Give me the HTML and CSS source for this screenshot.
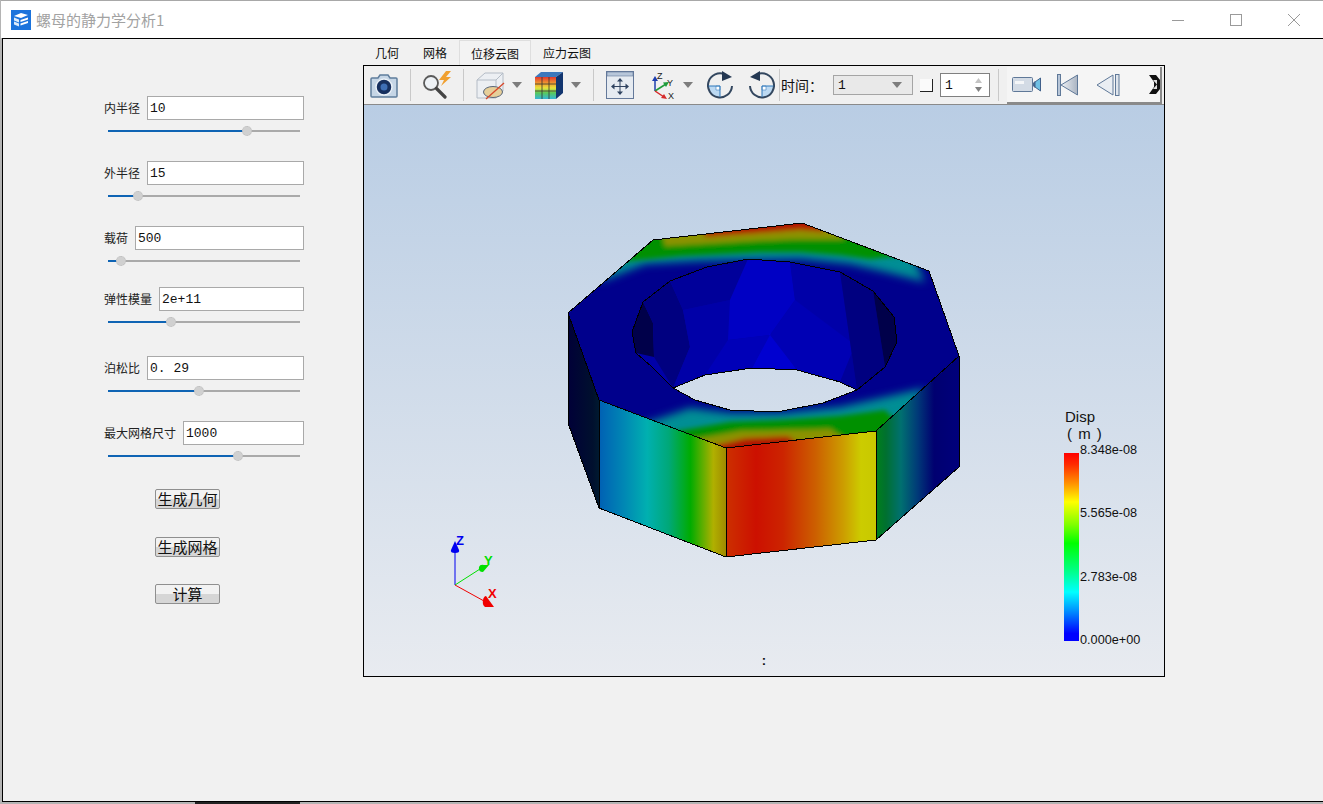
FILE: index.html
```html
<!DOCTYPE html>
<html lang="zh">
<head>
<meta charset="utf-8">
<title>螺母的静力学分析1</title>
<link rel="stylesheet" href="styles.css">
</head>
<body>
<div class="window">
  <header class="titlebar">
    <svg class="app-icon" width="20" height="20" viewBox="0 0 20 20">
      <rect width="20" height="20" fill="#1b73dc"/>
      <path d="M3 6 L10 3 L17 5 L10 8 Z" fill="#fff"/>
      <path d="M3 7.5 L8 9.5 V12.5 L3 10.5 Z M3 11.5 L8 13.5 V16.5 L3 14.5 Z" fill="#dcebfb"/>
      <path d="M9.5 10 L17 7.5 V9.5 L9.5 12 Z M9.5 13.5 L17 11 V13 L9.5 15.5 Z" fill="#fff"/>
    </svg>
    <span class="title-text">螺母的静力学分析1</span>
    <div class="win-controls">
      <span class="win-btn"><svg width="14" height="14" viewBox="0 0 14 14"><path d="M1 7.5H13" stroke="#9a9a9a" fill="none"/></svg></span>
      <span class="win-btn"><svg width="14" height="14" viewBox="0 0 14 14"><rect x="1.5" y="1.5" width="11" height="11" stroke="#9a9a9a" fill="none"/></svg></span>
      <span class="win-btn"><svg width="14" height="14" viewBox="0 0 14 14"><path d="M1 1L13 13M13 1L1 13" stroke="#9a9a9a" fill="none"/></svg></span>
    </div>
  </header>

  <main class="client">
    <section class="form-panel">
      <div class="param">
        <div class="param-row"><label class="param-label">内半径</label><input class="param-input" value="10"></div>
        <div class="slider" style="--v:72.4%"><i class="slider-fill"></i><i class="slider-handle"></i></div>
      </div>
      <div class="param">
        <div class="param-row"><label class="param-label">外半径</label><input class="param-input" value="15"></div>
        <div class="slider" style="--v:15.6%"><i class="slider-fill"></i><i class="slider-handle"></i></div>
      </div>
      <div class="param param--short">
        <div class="param-row"><label class="param-label">载荷</label><input class="param-input" value="500"></div>
        <div class="slider" style="--v:6.8%"><i class="slider-fill"></i><i class="slider-handle"></i></div>
      </div>
      <div class="param param--long">
        <div class="param-row"><label class="param-label">弹性模量</label><input class="param-input" value="2e+11"></div>
        <div class="slider" style="--v:32.8%"><i class="slider-fill"></i><i class="slider-handle"></i></div>
      </div>
      <div class="param">
        <div class="param-row"><label class="param-label">泊松比</label><input class="param-input" value="0. 29"></div>
        <div class="slider" style="--v:47.4%"><i class="slider-fill"></i><i class="slider-handle"></i></div>
      </div>
      <div class="param">
        <div class="param-row"><label class="param-label">最大网格尺寸</label><input class="param-input" value="1000"></div>
        <div class="slider" style="--v:67.7%"><i class="slider-fill"></i><i class="slider-handle"></i></div>
      </div>
      <div class="actions">
        <button class="action">生成几何</button>
        <button class="action">生成网格</button>
        <button class="action">计算</button>
      </div>
    </section>

    <section class="viewer">
      <nav class="tabs">
        <span class="tab">几何</span>
        <span class="tab">网格</span>
        <span class="tab tab--active">位移云图</span>
        <span class="tab">应力云图</span>
      </nav>
      <div class="frame">
        <div class="toolbar">
          <svg class="tool ml-6" width="28" height="25" viewBox="0 0 28 25">
            <path d="M2 5H8L10 2H18L20 5H26Q27 5 27 6V23Q27 24 26 24H2Q1 24 1 23V6Q1 5 2 5Z" fill="#c6d6e6" stroke="#5f7d9c" stroke-width="1.5"/>
            <circle cx="14" cy="14" r="8" fill="#17305f" stroke="#eaf1f8" stroke-width="1.5"/>
            <circle cx="14" cy="14" r="3.5" fill="#3f6fb5"/>
          </svg>
          <i class="sep ml-12"></i>
          <svg class="tool ml-11" width="31" height="28" viewBox="0 0 31 28">
            <circle cx="9" cy="12" r="7" fill="#eef2f6" stroke="#5a5a5a" stroke-width="1.8"/>
            <path d="M14.5 17.5 L23 26" stroke="#444" stroke-width="3.2" stroke-linecap="round"/>
            <path d="M24 0 L17 9 L22 9 L19 15 L29 6 L24 6 L29 0Z" fill="#f0a030"/>
          </svg>
          <i class="sep ml-10"></i>
          <svg class="tool ml-12" width="29" height="29" viewBox="0 0 29 29">
            <path d="M1 9 L9 2 H27 V20 L20 27 H1Z" fill="#eceff3" stroke="#b4bcc6"/>
            <path d="M1 9H20V27M20 9L27 2" fill="none" stroke="#b4bcc6"/>
            <ellipse cx="17" cy="21" rx="9.5" ry="5.5" fill="#e6cf9a" stroke="#59667a"/>
            <path d="M10 28 L28 12" stroke="#d8482a" stroke-width="1.3"/>
          </svg>
          <svg class="tool ml-7" width="10" height="6" viewBox="0 0 10 6"><path d="M0 0H10L5 6Z" fill="#7d7d7d"/></svg>
          <svg class="tool ml-13" width="28" height="28" viewBox="0 0 28 28">
            <defs><linearGradient id="g-cube" x1="0" x2="0" y1="0" y2="1"><stop offset="0" stop-color="#e2382e"/><stop offset=".3" stop-color="#f0a030"/><stop offset=".5" stop-color="#e8e23c"/><stop offset=".72" stop-color="#58c85c"/><stop offset="1" stop-color="#34b6d8"/></linearGradient></defs>
            <path d="M0 6 L6 1 H28 L21 6Z" fill="#3c78bc"/>
            <path d="M21 6 L28 1 V22 L21 28Z" fill="#12356f"/>
            <rect y="6" width="21" height="22" fill="url(#g-cube)"/>
            <path d="M7 6V28M14 6V28M0 13H21M0 20H21" stroke="#333" stroke-width=".8"/>
          </svg>
          <svg class="tool ml-8" width="10" height="6" viewBox="0 0 10 6"><path d="M0 0H10L5 6Z" fill="#7d7d7d"/></svg>
          <i class="sep ml-12"></i>
          <svg class="tool ml-12" width="28" height="28" viewBox="0 0 28 28">
            <rect x=".5" y=".5" width="27" height="27" fill="#e6ebf1" stroke="#64799a"/>
            <rect x="1" y="1" width="26" height="4" fill="#b7c6d9" stroke="#64799a" stroke-width=".6"/>
            <path d="M14 8V23M6.5 15.5H21.5" stroke="#2f4360" stroke-width="1"/>
            <path d="M14 7l-3 3.5h6zM14 24l-3-3.5h6zM5 15.5l3.5-3v6zM23 15.5l-3.5-3v6z" fill="#2f4360"/>
          </svg>
          <svg class="tool ml-18" width="24" height="30" viewBox="0 0 24 30">
            <path d="M3 21V10" stroke="#1f3fae" stroke-width="1.5"/><path d="M3 6l-3 5h6z" fill="#1f3fae"/>
            <path d="M3 21L14 14" stroke="#1f9c3a" stroke-width="1.5"/><path d="M17 12l-6 .5 3 4.5z" fill="#1f9c3a"/>
            <path d="M3 21L12 27" stroke="#d62a2a" stroke-width="1.5"/><path d="M15 29l-6-1 3-4z" fill="#d62a2a"/>
            <text class="axis-mini" x="5" y="9">Z</text><text class="axis-mini" x="15" y="16">Y</text><text class="axis-mini" x="16" y="29">X</text>
          </svg>
          <svg class="tool ml-7" width="10" height="6" viewBox="0 0 10 6"><path d="M0 0H10L5 6Z" fill="#7d7d7d"/></svg>
          <svg class="tool ml-14" width="27" height="28" viewBox="0 0 27 28">
            <path d="M1.5 15H13V26.5A12 12 0 0 1 1.5 15Z" fill="#bcd9f2"/>
            <path d="M13 15H9V19H13Z" fill="#fff" stroke="#3d7fc0" stroke-width=".6"/>
            <path d="M18 3.5A12 12 0 1 0 25 15" fill="none" stroke="#33475f" stroke-width="2"/>
            <path d="M1.5 15H13V26" fill="none" stroke="#2f79bb" stroke-width="1"/>
            <path d="M15 0L25 6L15 10Z" fill="#243852"/>
          </svg>
          <svg class="tool ml-14" width="27" height="28" viewBox="0 0 27 28">
            <path d="M25.5 15H14V26.5A12 12 0 0 0 25.5 15Z" fill="#bcd9f2"/>
            <path d="M14 15H18V19H14Z" fill="#fff" stroke="#3d7fc0" stroke-width=".6"/>
            <path d="M9 3.5A12 12 0 1 1 2 15" fill="none" stroke="#33475f" stroke-width="2"/>
            <path d="M25.5 15H14V26" fill="none" stroke="#2f79bb" stroke-width="1"/>
            <path d="M12 0L2 6L12 10Z" fill="#243852"/>
          </svg>
          <i class="sep ml-4"></i>
          <span class="time-label ml-1">时间：</span>
          <div class="combo"><span>1</span><svg width="10" height="6" viewBox="0 0 10 6"><path d="M0 0H10L5 6Z" fill="#7d7d7d"/></svg></div>
          <i class="mini-check ml-7"></i>
          <div class="spin ml-7"><span>1</span><svg width="7" height="14" viewBox="0 0 7 14"><path d="M3.5 0L7 5H0Z" fill="#c4c4c4"/><path d="M3.5 14L7 9H0Z" fill="#808080"/></svg></div>
          <i class="sep ml-8"></i>
          <div class="anim-bar ml-8">
            <svg class="tool ml-5" width="29" height="17" viewBox="0 0 29 17">
              <rect x=".5" y="1.5" width="20" height="14" rx="1" fill="#d3dbe5" stroke="#5f7898"/>
              <rect x="3" y="5" width="9" height="3" fill="#f4f6f8"/>
              <path d="M21 7L23 5V12L21 10Z" fill="#4a6890"/>
              <path d="M23 6L28.5 2V15L23 11Z" fill="#6fc0e4" stroke="#41608a"/>
            </svg>
            <svg class="tool ml-16" width="21" height="22" viewBox="0 0 21 22">
              <rect x=".5" y=".5" width="3" height="21" fill="#b8c6d8" stroke="#5f7898"/>
              <defs><linearGradient id="g-first" x1="0" x2="1"><stop offset="0" stop-color="#eef1f5"/><stop offset="1" stop-color="#aab4c2"/></linearGradient></defs>
              <path d="M4 11L20.5 1V21Z" fill="url(#g-first)" stroke="#5f7898"/>
            </svg>
            <svg class="tool ml-18" width="24" height="22" viewBox="0 0 24 22">
              <path d="M1 11L17 1V21Z" fill="#eaeef3" stroke="#5f7898"/>
              <rect x="19.5" y=".5" width="3.5" height="21" fill="#dfe5ec" stroke="#5f7898"/>
            </svg>
            <svg class="tool ml-29" width="12" height="19" viewBox="0 0 12 19">
              <path d="M0 0H7L11 5V14L7 19H0L5 12V7Z" fill="#111"/>
              <path d="M4 5H8V14H4L8 9.5Z" fill="#ddd"/>
            </svg>
          </div>
        </div>

        <div class="canvas">
          <svg class="scene" width="800" height="571" viewBox="364 105 800 571">
            <defs>
              <linearGradient id="g-left" gradientUnits="userSpaceOnUse" x1="568" x2="599" y1="0" y2="0"><stop offset="0" stop-color="#000038"/><stop offset=".8" stop-color="#00102e"/><stop offset="1" stop-color="#001a30"/></linearGradient>
              <linearGradient id="g-fl" gradientUnits="userSpaceOnUse" x1="599" x2="726" y1="0" y2="0">
                <stop offset="0" stop-color="#0060b4"/><stop offset=".2" stop-color="#0088b4"/><stop offset=".38" stop-color="#00b0b0"/><stop offset=".55" stop-color="#00a878"/><stop offset=".72" stop-color="#00ac00"/><stop offset=".9" stop-color="#b0b000"/><stop offset="1" stop-color="#a08a00"/>
              </linearGradient>
              <linearGradient id="g-fc" gradientUnits="userSpaceOnUse" x1="726" x2="876" y1="0" y2="0">
                <stop offset="0" stop-color="#cc3000"/><stop offset=".2" stop-color="#cc1000"/><stop offset=".38" stop-color="#cc2400"/><stop offset=".6" stop-color="#cc6000"/><stop offset=".78" stop-color="#cc9c00"/><stop offset=".9" stop-color="#cccc00"/><stop offset="1" stop-color="#c8c800"/>
              </linearGradient>
              <linearGradient id="g-fr" gradientUnits="userSpaceOnUse" x1="876" x2="959" y1="0" y2="0">
                <stop offset="0" stop-color="#00801a"/><stop offset=".12" stop-color="#007030"/><stop offset=".3" stop-color="#007070"/><stop offset=".5" stop-color="#003a78"/><stop offset=".7" stop-color="#000070"/><stop offset="1" stop-color="#00007c"/>
              </linearGradient>
              <filter id="soft" filterUnits="userSpaceOnUse" x="540" y="190" width="450" height="290"><feGaussianBlur stdDeviation="2.4"/></filter>
              <filter id="soft-wide" filterUnits="userSpaceOnUse" x="540" y="190" width="450" height="290"><feGaussianBlur stdDeviation="4.5"/></filter>
              <clipPath id="top-clip"><path clip-rule="evenodd" d="M568 313L653 240L802 223L929 271L959 356L876 431L726 448L599 400Z M632 332L643 302L670 281L707 267L748 259L790 262L840 272L873 291L894 317L897 342L885 367L857 390L823 403L777 412L730 410L695 400L673 388L652 367L636 353Z"/></clipPath>
            </defs>

            <polygon points="568,313 599,400 599,508 568,423" fill="url(#g-left)"/>
            <polygon points="599,400 726,448 726,557 599,508" fill="url(#g-fl)"/>
            <polygon points="726,448 876,431 876,540 726,557" fill="url(#g-fc)"/>
            <polygon points="876,431 959,356 959,467 876,540" fill="url(#g-fr)"/>

            <polygon points="673,388 652,367 636,353 632,332 643,302 670,281 707,267 748,259 790,262 840,272 873,291 894,317 897,342 885,367 857,390 840,382 797,370 752,368 705,375" fill="#0000a8"/>
            <polygon points="632,332 643,302 653,323 654,357 636,353" fill="#00004a"/>
            <polygon points="643,302 670,281 683,310 690,347 673,388 654,357 653,323" fill="#000080"/>
            <polygon points="670,281 707,267 748,259 730,300 683,310" fill="#00009a"/>
            <polygon points="683,310 730,300 728,340 705,375 673,388 690,347" fill="#0000a8"/>
            <polygon points="748,259 730,300 728,340 770,335 795,300 790,262" fill="#0000c4"/>
            <polygon points="770,333 752,368 797,370" fill="#0000d0"/>
            <polygon points="728,340 770,335 752,368 705,375" fill="#0000b8"/>
            <polygon points="790,262 840,272 857,317 855,345 795,300" fill="#0000a8"/>
            <polygon points="795,300 855,345 840,382 797,370 770,335" fill="#0000b4"/>
            <polygon points="840,272 857,317 855,345 840,382 857,390" fill="#00009a"/>
            <polygon points="840,272 873,291 885,367 857,390" fill="#000080"/>
            <polygon points="873,291 894,317 897,342 885,367" fill="#00004a"/>

            <polygon class="nut-top" points="568,313 653,240 802,223 929,271 959,356 876,431 726,448 599,400" clip-path="url(#top-clip)"/>
            <g clip-path="url(#top-clip)">
              <g filter="url(#soft-wide)">
                <polygon points="600,282 625,272 645,264 700,261 750,260 800,259 850,264 885,272 925,282 900,230 640,205" fill="#008e94"/>
                <polygon points="632,428 690,408 730,413 780,413 840,407 885,397 925,388 890,450 726,462 650,445" fill="#008e94"/>
              </g>
              <g filter="url(#soft)">
                <polygon points="618,262 680,256 720,254 760,252 800,252 840,255 870,259 900,256 840,210 640,210" fill="#009000"/>
                <polygon points="665,246 750,241 800,239 845,239 815,210 660,220" fill="#8c9200"/>
                <polygon points="705,237 760,233 800,230 825,232 810,210 700,218" fill="#b01400"/>
                <polygon points="660,434 730,422 780,420 840,416 885,410 900,425 880,445 726,462" fill="#009000"/>
                <polygon points="690,440 740,431 790,430 830,429 850,442 726,462" fill="#8c9200"/>
                <polygon points="708,447 745,438 788,436 800,445 726,462" fill="#b01400"/>
              </g>
            </g>

            <g class="edges">
              <polygon points="568,313 653,240 802,223 929,271 959,356 876,431 726,448 599,400"/>
              <polyline points="568,313 568,423 599,508 726,557 876,540 959,467 959,356"/>
              <path d="M599 400V508M726 448V557M876 431V540"/>
              <polygon points="632,332 643,302 670,281 707,267 748,259 790,262 840,272 873,291 894,317 897,342 885,367 857,390 823,403 777,412 730,410 695,400 673,388 652,367 636,353"/>
              <polyline points="673,388 705,375 752,368 797,370 840,382 857,390"/>
            </g>

            <g class="triad">
              <path d="M455 585V550" stroke="#0000f0" stroke-width="1"/>
              <path d="M455 541L451 550Q450 553 455 553Q460 553 459 550Z" fill="#0000f0"/>
              <path d="M455 585L480 569" stroke="#00e000" stroke-width="1"/>
              <path d="M489 565L483 572Q478 572 479 567Q480 564 484 565Z" fill="#00e000"/>
              <path d="M455 585L484 601" stroke="#f00000" stroke-width="1"/>
              <path d="M486 596L494 607L485 607Q482 605 483 600Q484 596 486 596Z" fill="#f00000"/>
              <text class="triad-z" x="456" y="545">Z</text>
              <text class="triad-y" x="484" y="565">Y</text>
              <text class="triad-x" x="488" y="598">X</text>
            </g>
          </svg>

          <div class="legend">
            <div class="legend-title">Disp</div>
            <div class="legend-unit">( m )</div>
            <div class="legend-body">
              <div class="legend-bar"></div>
              <div class="legend-labels"><span>8.348e-08</span><span>5.565e-08</span><span>2.783e-08</span><span>0.000e+00</span></div>
            </div>
          </div>
          <div class="caption">:</div>
        </div>
      </div>
    </section>
  </main>
  <footer class="sliver"><i class="sliver-task"></i></footer>
</div>
</body>
</html>
```
FILE: styles.css
```css
* { box-sizing: border-box; }
html, body { margin: 0; height: 100%; overflow: hidden; }
body {
  font-family: "Noto Sans CJK SC", "Liberation Sans", sans-serif;
  font-size: 12px;
  color: #111;
}
i { display: block; }

.window {
  width: 1323px;
  height: 804px;
  display: flex;
  flex-direction: column;
  background: #b4b4b4;
}

.titlebar {
  height: 38px;
  flex: none;
  margin-left: 1px;
  border-top: 1px solid #a8a8a8;
  background: #fff;
  display: flex;
  align-items: center;
  padding-left: 10px;
}
.app-icon { flex: none; }
.title-text { margin-left: 5px; font-size: 15px; color: #a2a2a2; line-height: 20px; }
.win-controls { margin-left: auto; display: flex; padding-right: 0; }
.win-btn { width: 58px; height: 30px; display: flex; align-items: center; justify-content: center; }

.client {
  flex: 1;
  min-height: 0;
  margin-left: 2px;
  display: flex;
  background: #f1f1f1;
  border: solid #000;
  border-width: 1px 0 1px 1px;
}

.form-panel {
  width: 360px;
  flex: none;
  padding: 57px 0 0 101px;
}
.param { width: 200px; height: 65px; }
.param--short { height: 61px; }
.param--long { height: 69px; }
.param-row { display: flex; align-items: center; height: 24px; }
.param-label { flex: none; margin-right: 7px; font-size: 12px; line-height: 24px; color: #222; }
.param-input {
  flex: 1;
  min-width: 0;
  height: 24px;
  border: 1px solid #a9a9a9;
  background: #fff;
  padding: 0 2px;
  font-family: "Liberation Mono", monospace;
  font-size: 13px;
  color: #111;
  outline: none;
}
.slider {
  position: relative;
  width: 192px;
  height: 2px;
  margin: 10px 0 0 4px;
  background: #aaa;
}
.slider-fill { width: var(--v); height: 2px; background: #0f64b4; }
.slider-handle {
  position: absolute;
  left: var(--v);
  top: -4px;
  width: 10px;
  height: 10px;
  margin-left: -5px;
  border-radius: 50%;
  background: #d0d0d0;
  border: 1px dotted #bcbcbc;
}

.actions {
  display: flex;
  flex-direction: column;
  gap: 27.5px;
  margin: 3px 0 0 51px;
  width: 65px;
}
.action {
  width: 65px;
  height: 20px;
  padding: 0;
  border: 1px solid #8f8f8f;
  border-radius: 2px;
  background: linear-gradient(#f2f2f2 0, #f2f2f2 50%, #d6d6d6 50%, #d6d6d6 100%);
  font-family: inherit;
  font-size: 15px;
  line-height: 18px;
  color: #111;
  white-space: nowrap;
  overflow: hidden;
}

.viewer { width: 802px; flex: none; display: flex; flex-direction: column; }
.tabs { height: 26px; display: flex; flex: none; }
.tab { padding: 1px 12px 0; line-height: 26px; font-size: 12px; color: #111; }
.tab--active {
  margin-top: 1px;
  padding-top: 0;
  line-height: 25px;
  background: #f3f3f3;
  border: 1px solid #dedede;
  border-bottom: 0;
  padding-left: 11px;
  padding-right: 11px;
}

.frame { width: 802px; height: 612px; border: 1px solid #000; display: flex; flex-direction: column; }
.toolbar {
  height: 39px;
  flex: none;
  display: flex;
  align-items: center;
  border-bottom: 1px solid #8a8a8a;
  background: #f0f0f0;
}
.tool { flex: none; display: block; }
.sep { flex: none; width: 1px; height: 32px; background: #c9c9c9; }
.axis-mini { font: 9px "Liberation Sans", sans-serif; fill: #222; }

.ml-1 { margin-left: 1px; } .ml-4 { margin-left: 4px; } .ml-5 { margin-left: 5px; }
.ml-6 { margin-left: 6px; } .ml-7 { margin-left: 7px; } .ml-8 { margin-left: 8px; }
.ml-10 { margin-left: 10px; } .ml-11 { margin-left: 11px; } .ml-12 { margin-left: 12px; }
.ml-13 { margin-left: 13px; } .ml-14 { margin-left: 14px; } .ml-16 { margin-left: 16px; }
.ml-18 { margin-left: 18px; } .ml-29 { margin-left: 29px; }

.time-label { width: 52px; flex: none; font-size: 14px; color: #111; }
.combo {
  width: 80px;
  height: 20px;
  flex: none;
  display: flex;
  align-items: center;
  justify-content: space-between;
  padding: 0 10px 0 4px;
  border: 1px solid #a5a5a5;
  background: #e9e9e9;
  font-family: "Liberation Mono", monospace;
  font-size: 13px;
}
.mini-check { width: 13px; height: 13px; flex: none; border: solid #222; border-width: 0 1px 1px 0; background: #fafafa; }
.spin {
  width: 50px;
  height: 24px;
  flex: none;
  display: flex;
  align-items: center;
  justify-content: space-between;
  padding: 0 7px 0 4px;
  border: 1px solid #808080;
  background: #fff;
  font-family: "Liberation Mono", monospace;
  font-size: 13px;
}
.anim-bar {
  width: 155px;
  height: 37px;
  flex: none;
  align-self: flex-end;
  display: flex;
  align-items: center;
  background: #f5f5f5;
  border: solid #8a8a8a;
  border-width: 0 2px 2px 0;
  overflow: hidden;
}

.canvas {
  position: relative;
  flex: 1;
  min-height: 0;
  background: linear-gradient(#b9cde4, #e8ebf0);
}
.scene { display: block; }
.nut-top { fill: #00008c; }
.edges { fill: none; stroke: #000; stroke-width: 1; shape-rendering: crispEdges; }
.triad-z, .triad-y, .triad-x { font: bold 13px "Liberation Sans", sans-serif; }
.triad-z { fill: #0000f0; }
.triad-y { fill: #00e000; }
.triad-x { fill: #f00000; }

.legend {
  position: absolute;
  left: 701px;
  top: 303px;
  font-family: "Liberation Sans", sans-serif;
  color: #111;
}
.legend-title { font-size: 15px; line-height: 17px; }
.legend-unit { font-size: 15px; line-height: 17px; padding-left: 2px; word-spacing: 2px; margin-bottom: 11px; }
.legend-body { display: flex; margin-left: -1px; }
.legend-bar {
  width: 15px;
  height: 188px;
  flex: none;
  background: linear-gradient(#ff0000 0, #ff2a00 6%, #ff9000 16%, #ffff00 26%, #80ff00 38%, #00ff00 48%, #00ff80 62%, #00ffff 74%, #0090ff 84%, #0000ff 96%, #0000ff 100%);
}
.legend-labels {
  height: 204px;
  margin: -10px 0 0 1px;
  display: flex;
  flex-direction: column;
  justify-content: space-between;
  font-size: 12.7px;
  line-height: 14px;
  white-space: nowrap;
}
.caption {
  position: absolute;
  left: 0;
  right: 0;
  bottom: 7px;
  text-align: center;
  font: bold 13px/16px "Liberation Sans", sans-serif;
  color: #111;
}

.sliver { height: 2px; flex: none; }
.sliver-task { width: 105px; height: 2px; margin-left: 195px; background: #222; }
```
